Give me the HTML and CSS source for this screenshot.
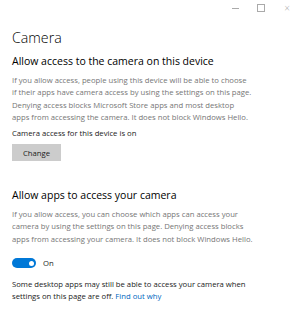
FILE: index.html
```html
<!DOCTYPE html>
<html>
<head>
  <link rel="stylesheet" href="styles.css">
</head>
<body>
  <div class="titlebar">
    <span class="win-btn min"></span>
    <span class="win-btn max"></span>
    <span class="win-btn close">&#215;</span>
  </div>

  <div class="page">
    <h1 class="page-title">Camera</h1>

    <h2 class="section-title">Allow access to the camera on this device</h2>
    <p class="description">If you allow access, people using this device will be able to choose<br>
      if their apps have camera access by using the settings on this page.<br>
      Denying access blocks Microsoft Store apps and most desktop<br>
      apps from accessing the camera. It does not block Windows Hello.</p>
    <div class="status">Camera access for this device is on</div>
    <button class="button">Change</button>

    <h2 class="section-title second">Allow apps to access your camera</h2>
    <p class="description">If you allow access, you can choose which apps can access your<br>
      camera by using the settings on this page. Denying access blocks<br>
      apps from accessing your camera. It does not block Windows Hello.</p>
    <label class="toggle-row">
      <span class="toggle"><span class="knob"></span></span>
      <span class="toggle-label">On</span>
    </label>
    <p class="note">Some desktop apps may still be able to access your camera when<br>
      settings on this page are off. <a href="#" class="link">Find out why</a></p>
  </div>
</body>
</html>
```

FILE: styles.css
```css
body {
  margin: 0;
  font-family: "Open Sans", sans-serif;
  background: #fff;
  color: #1a1a1a;
  width: 300px;
  height: 312px;
  overflow: hidden;
}
.titlebar {
  display: flex;
  justify-content: flex-end;
  align-items: center;
  height: 16px;
}
.win-btn {
  display: flex;
  justify-content: center;
  align-items: center;
  width: 26px;
  height: 16px;
  font-size: 10px;
  color: #aaa;
}
.win-btn.min::before {
  content: "";
  width: 7px;
  height: 1px;
  background: #aaa;
}
.win-btn.max::before {
  content: "";
  width: 6px;
  height: 6px;
  border: 1px solid #aaa;
}
.win-btn.close {
  font-weight: 300;
}
.page {
  padding: 0 12px;
}
.page-title {
  font-size: 14.2px;
  font-weight: 300;
  color: #000;
  margin: 12px 0 0;
  line-height: 20px;
}
.section-title {
  font-size: 10.5px;
  font-weight: 400;
  color: #000;
  margin: 5px 0 0;
  line-height: 16px;
}
.section-title.second {
  margin-top: 26px;
}
.description {
  font-size: 7.7px;
  line-height: 12.3px;
  color: #767676;
  margin: 5px 0 0;
  white-space: nowrap;
}
.status {
  font-size: 7.7px;
  line-height: 12px;
  margin-top: 4px;
}
.button {
  display: block;
  margin-top: 5px;
  width: 49px;
  height: 17px;
  border: none;
  background: #ccc;
  font-family: inherit;
  font-size: 7.7px;
  color: #1a1a1a;
  padding: 0;
}
.toggle-row {
  display: flex;
  align-items: center;
  gap: 7px;
  margin-top: 13px;
}
.toggle {
  display: flex;
  align-items: center;
  justify-content: flex-end;
  width: 24px;
  height: 10px;
  border-radius: 5px;
  background: #0078d7;
  padding: 0 2.5px;
  box-sizing: border-box;
}
.knob {
  width: 5px;
  height: 5px;
  border-radius: 50%;
  background: #fff;
}
.toggle-label {
  font-size: 7.7px;
}
.note {
  font-size: 7.7px;
  line-height: 12px;
  margin: 10px 0 0;
  white-space: nowrap;
}
.link {
  color: #0067c0;
  text-decoration: none;
}
```
